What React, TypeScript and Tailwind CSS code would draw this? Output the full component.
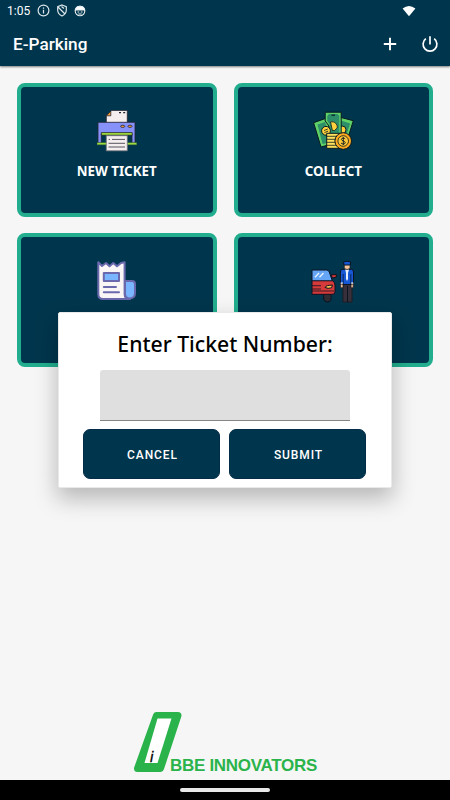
import type { ReactNode } from 'react';

function PrinterIcon() {
  return (
    <svg width="40" height="42" viewBox="0 0 40 42" stroke="#20232e" strokeWidth="0.8">
      <path d="M9.3 5.5 14.5.4H30.3V13H9.3Z" fill="#f5eeee" />
      <path d="M9.5 5.8 13.8 1v4.8Z" fill="#f6a13a" />
      <path d="M22 2.7h2M26.2 2.7h2" strokeWidth="1.2" />
      <path d="M1 12.3H38V33H35V24H4.3V33H1Z" fill="#8791fa" />
      <path d="M4.3 22.6H35.2V25.2H4.3Z" fill="#a9e63c" />
      <ellipse cx="25.7" cy="16.3" rx="2.1" ry="1.1" fill="#f6a13a" />
      <ellipse cx="33" cy="16.3" rx="2.1" ry="1.1" fill="#f6a13a" />
      <path d="M0 32.7H39.7V34.8H0Z" fill="#a9e63c" stroke="#3c6a38" strokeWidth="0.5" />
      <path d="M9.3 25.7H30.3V40.8H9.3Z" fill="#f5eeee" stroke="#6f7078" />
      <path d="M11.7 29.4h1.3M15 29.4H28M11.5 33.3H28M11.5 37H28" stroke="#55565e" strokeWidth="1" />
    </svg>
  );
}

function MoneyIcon() {
  return (
    <svg width="41" height="42" viewBox="0 0 41 42" stroke="#071a20" strokeWidth="1">
      <path d="M.6 12.7 13 8.3 22 33 8 37Z" fill="#5fd267" />
      <path d="M4.5 14.5 12 12 19 32 9.5 34Z" fill="#2c8f6a" stroke="none" />
      <path d="M27 7.2 40.3 10.7 34 31 24 28Z" fill="#5fd267" />
      <path d="M28 10.5 37.2 13.5 32.8 27 25 27Z" fill="#2c8f6a" stroke="none" />
      <circle cx="29.2" cy="19.8" r="3.8" fill="#ffd23d" />
      <path d="M12.2 2.2H28.2V28H17.5L16 16 12.2 11Z" fill="#5fd267" />
      <path d="M16 4H24.5L26.3 6V27H18L16.5 14 14.3 11V6Z" fill="#2c8f6a" stroke="none" />
      <circle cx="13" cy="20.8" r="4.4" fill="#ffd23d" />
      <path d="M11 20.5l3.8-1.5M11.5 22.5l3.6-1.3" strokeWidth="0.8" />
      <path d="M17.5 12C21.5 11 24.7 14 24.2 18L21.5 20.5H19.4Z" fill="#ffd23d" strokeWidth="0.8" />
      <path d="M18.5 5.2h3.5" strokeWidth="1.2" />
      <path d="M13.7 23.3H27V38.3H13.7Z" fill="#ffe05a" />
      <path d="M13.7 26.3H25M13.7 29.3H25M13.7 32.3H25M13.7 35.3H25" strokeWidth="0.8" />
      <circle cx="30.2" cy="31" r="8.3" fill="#ffa91f" />
      <circle cx="30.2" cy="31" r="5.3" fill="#ffc83a" strokeWidth="0.8" />
      <path d="M32.2 29C31.5 27.7 28.3 27.8 28.4 29.4S32.3 31 32.3 32.7 28.8 34.5 28 32.9M30.3 27V35" fill="none" strokeWidth="0.9" />
    </svg>
  );
}

function ReceiptIcon() {
  return (
    <svg width="40" height="41" viewBox="0 0 40 41" stroke="#6b69ae" strokeWidth="2" strokeLinejoin="round" strokeLinecap="round">
      <path d="M1.3 2.3 5 6 9 3 12.5 6.3 16.3 3 20 6.3 24 3 27.6 2.3V34Q27.6 39 33 39H6Q1.3 39 1.3 34Z" fill="#faf6f6" />
      <path d="M28 33.5Q28 38.3 33 38.5 38 38 38 33V24Q38 21 35 21H28Z" fill="#79b6ff" />
      <path d="M6.8 13H22V21H6.8Z" fill="#79b6ff" />
      <path d="M6.8 27H19M6.8 32.3H22" />
    </svg>
  );
}

function ValetIcon() {
  return (
    <svg width="44" height="44" viewBox="0 0 44 44" stroke="#0b1220" strokeWidth="1">
      <path d="M12.7 34H20V40.5Q19.5 43 16.4 43T12.7 40Z" fill="#302c34" />
      <path d="M1 21.3H21Q24 23 24 26V33Q24 35.3 21 35.3H1Z" fill="#d63a3a" />
      <path d="M1 11H15.5Q17.5 11 18.3 13L21.3 21.8H1Z" fill="#65a5f5" />
      <path d="M4 18.2 8 14M8.5 18.2 12.5 14" stroke="#e8f3ff" strokeWidth="1.3" />
      <path d="M20 16 25.3 15.5V18L21.5 19Z" fill="#d63a3a" />
      <path d="M14 28.5Q15 26 21.5 26.2L20.5 28.8Q17 30 14 28.5Z" fill="#ffc34d" />
      <path d="M1 26.7H10M1 30H10M1 32H23" strokeWidth="0.8" />
      <path d="M32 25H41V43H32Z" fill="#38303a" stroke="#211c24" />
      <path d="M36.5 27V43" />
      <path d="M29.5 25H32V28.7H29.5ZM40 25H42.3V28.7H40Z" fill="#f2bf94" strokeWidth="0.6" />
      <path d="M31 10.3H40.7Q42.5 11 42.5 13V24.7H40V25.5H32V24.7H29.4V13Q29.5 11 31 10.3Z" fill="#1557d5" />
      <path d="M32.2 15V25M39.8 15V25" strokeWidth="0.7" />
      <path d="M34.2 10.5H38L37 14V20L36 22 35 20V14Z" fill="#e7f1ff" stroke="none" />
      <path d="M29.7 24.2H31.8M40.2 24.2H42.3" stroke="#ffffff" strokeWidth="1.2" />
      <path d="M33.3 5.5H39V9.2Q36 12 33.3 9.2Z" fill="#f5c49b" strokeWidth="0.6" />
      <path d="M32.5 3Q36 1.5 39.7 3L39.3 6H33Z" fill="#1557d5" />
    </svg>
  );
}

function Tile({ label, children }: { label: string; children: ReactNode }) {
  return (
    <div className="flex h-[133.5px] flex-col items-center rounded-[8px] border-4 border-[#22ae8e] bg-[#00364d] pt-[21.5px]">
      <div className="flex h-[44px] items-center">{children}</div>
      <span className="mt-[9.5px] font-['Noto_Sans',sans-serif] text-[13.3px] leading-[18px] font-bold text-white">{label}</span>
    </div>
  );
}

export default function App() {
  return (
    <div className="relative flex h-[800px] w-[450px] flex-col overflow-hidden bg-[#f6f6f6] font-[Roboto,sans-serif]">
      {/* Status bar + app bar */}
      <header className="h-[66px] shrink-0 bg-[#00364d] text-white shadow-[0_1px_2px_rgba(0,0,0,0.5)]">
        <div className="flex h-[21px] items-center pl-[7px] pr-[34px]">
          <span className="text-[12px] leading-[20px]">1:05</span>
          <svg className="ml-[7px]" width="13" height="13" viewBox="0 0 13 13" fill="none" stroke="#dce7eb">
            <circle cx="6.5" cy="6.5" r="5.4" strokeWidth="1.2" />
            <path d="M6.5 5.8V9.5M6.5 3.5V4.7" strokeWidth="1.2" />
          </svg>
          <svg className="ml-[6px]" width="12" height="13" viewBox="0 0 12 13" fill="none" stroke="#dce7eb" strokeWidth="1.2">
            <path d="M6 1 10.3 2.6V6Q10.3 10 6 12 1.7 10 1.7 6V2.6ZM2 3 9 10M5.5 2.5 8 4.5" />
          </svg>
          <svg className="ml-[6px]" width="12" height="12" viewBox="0 0 12 12" fill="none" stroke="#e8eff2" strokeWidth="1.1">
            <circle cx="6" cy="6" r="4.8" />
            <path d="M1.3 5Q2 1.2 6 1.2T10.7 5Z" fill="#ffffff" />
            <path d="M3.5 7H5.2M6.8 7H8.5M4.3 9H7.7" />
          </svg>
          <svg className="ml-auto" width="14" height="12" viewBox="0 0 14 12" fill="#ffffff">
            <path d="M.6 3.4Q7-1.6 13.4 3.4L7 11.2Z" />
          </svg>
        </div>
        <div className="flex h-[45px] items-center pl-[13px] pr-[11px]">
          <h1 className="pt-[3px] text-[17.2px] font-medium">E-Parking</h1>
          <svg className="ml-auto" width="14" height="14" viewBox="0 0 14 14" fill="none" stroke="#ffffff" strokeWidth="1.9">
            <path d="M7 .8V13.2M.8 7H13.2" />
          </svg>
          <svg className="ml-[24px]" width="18" height="18" viewBox="0 0 18 18" fill="none" stroke="#ffffff" strokeWidth="1.7">
            <path d="M9 1.2V9.6M4.8 3.7A6.9 6.9 0 1 0 13.2 3.7" />
          </svg>
        </div>
      </header>

      <main className="grid grid-cols-2 gap-x-[17px] gap-y-[16.5px] px-[16.8px] pt-[17.2px]">
        <Tile label="NEW TICKET"><PrinterIcon /></Tile>
        <Tile label="COLLECT"><MoneyIcon /></Tile>
        <Tile label="REPORT"><ReceiptIcon /></Tile>
        <Tile label="VALET"><ValetIcon /></Tile>
      </main>

      {/* Company logo */}
      <footer className="mt-auto flex h-[69px] shrink-0 items-start pl-[133px]">
        <svg width="49" height="62" viewBox="0 0 49 62">
          <path d="M23.5 4.5H45L27.5 57.5H4.5Z" fill="#2bb34b" stroke="#2bb34b" strokeWidth="7" strokeLinejoin="round" />
          <path d="M24.5 7.5H38.5L24.5 52H11.5Z" fill="#ffffff" />
          <text x="17" y="50.5" fontFamily="Liberation Sans, Arial, sans-serif" fontSize="15" fontStyle="italic" fill="#000000" stroke="#000000" strokeWidth="0.3">i</text>
        </svg>
        <span className="-ml-[12px] mt-[46px] font-['Liberation_Sans',Arial,sans-serif] text-[17px] leading-[18px] font-bold tracking-[-0.3px] whitespace-nowrap text-[#2bb34b]">
          BBE INNOVATORS
        </span>
      </footer>

      <nav className="flex h-[20px] shrink-0 justify-center bg-black pt-[8px]">
        <div className="h-[4px] w-[90px] rounded-full bg-[#e8e8e8]" />
      </nav>

      {/* Ticket number dialog */}
      <div className="absolute top-[312px] left-[58px] flex h-[176px] w-[334px] flex-col items-center rounded-[2px] border border-[#e9e9e9] bg-white shadow-[0_10px_22px_1px_rgba(0,0,0,0.25)]">
        <h2 className="mt-[15px] font-['Noto_Sans',sans-serif] text-[21.2px] leading-[32px] font-medium text-black">Enter Ticket Number:</h2>
        <input className="mt-[10px] h-[51px] w-[250px] rounded-t-[3px] border-b border-[#858585] bg-[#dfdfdf] px-3 outline-none" />
        <div className="mt-[8px] mr-[1px] flex gap-[9px]">
          <button className="h-[50px] w-[137px] rounded-[7px] border border-[#032c48] bg-[#00364d] pt-[2px] pl-[2px] text-[12px] font-medium tracking-[0.9px] text-white">CANCEL</button>
          <button className="h-[50px] w-[137px] rounded-[7px] border border-[#032c48] bg-[#00364d] pt-[2px] pl-[2px] text-[12px] font-medium tracking-[0.9px] text-white">SUBMIT</button>
        </div>
      </div>
    </div>
  );
}
